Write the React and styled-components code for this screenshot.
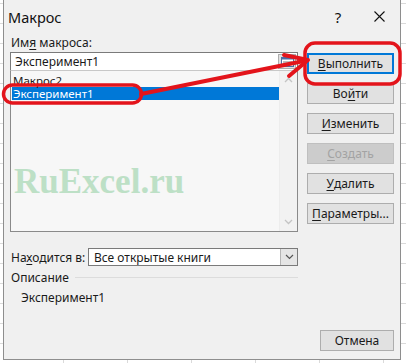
import React from 'react';
import styled, { createGlobalStyle } from 'styled-components';

const GlobalStyle = createGlobalStyle`
  html, body {
    margin: 0;
    padding: 0;
  }
  body {
    width: 406px;
    height: 363px;
    overflow: hidden;
    background-color: #ffffff;
    background-image:
      repeating-linear-gradient(0deg, transparent 0 19px, #dadada 19px 20px),
      repeating-linear-gradient(90deg, transparent 0 63px, #dadada 63px 64px);
    font-family: "Segoe UI", "Noto Sans", "Liberation Sans", sans-serif;
  }
`;

const Page = styled.div`
  position: relative;
  width: 406px;
  height: 363px;
`;

const Dialog = styled.div`
  margin-left: 3px;
  width: 398px;
  height: 360px;
  box-sizing: border-box;
  border: 1px solid #8e8e8e;
  border-top: none;
  background: #f0f0f0;
  display: flex;
  flex-direction: column;
  color: #1a1a1a;
  font-size: 12px;
`;

const TitleBar = styled.div`
  height: 30px;
  flex: none;
  display: flex;
  align-items: center;
  padding-left: 4px;
  font-size: 14.5px;
  color: #111;
`;

const Title = styled.span`
  flex: 1;
  padding-top: 3px;
`;

const TitleButton = styled.span`
  width: ${p => p.$w}px;
  display: flex;
  justify-content: center;
  align-items: center;
  font-size: 15px;
  padding-top: 3px;
`;

const Body = styled.div`
  flex: 1;
  display: flex;
  gap: 9px;
  padding: 5px 6px 8px 6px;
`;

const LeftColumn = styled.div`
  width: 289px;
  display: flex;
  flex-direction: column;
`;

const RightColumn = styled.div`
  flex: 1;
  display: flex;
  flex-direction: column;
  gap: 9px;
  padding-top: 18px;
`;

const Label = styled.div`
  height: 17px;
  line-height: 15px;
  padding-left: 1px;
`;

const Key = styled.span`
  text-decoration: underline;
  text-underline-offset: 2px;
`;

const InputBox = styled.div`
  height: 19px;
  box-sizing: border-box;
  border: 1px solid #7a7a7a;
  background: #ffffff;
  display: flex;
  align-items: center;
  padding-left: 4px;
`;

const InputText = styled.span`
  flex: 1;
`;

const RefButton = styled.span`
  width: 18px;
  height: 15px;
  margin-right: 1px;
  box-sizing: border-box;
  border: 1px solid #adadad;
  background: #e1e1e1;
  display: flex;
  align-items: center;
  justify-content: center;
`;

const ListBox = styled.div`
  height: 162px;
  margin-top: -1px;
  box-sizing: border-box;
  border: 1px solid #8a8a8a;
  border-top-color: #c8c8c8;
  background: #f7f7f7;
  display: flex;
  position: relative;
`;

const Rows = styled.div`
  flex: 1;
  padding-top: 3px;
  padding-left: 1px;
`;

const Row = styled.div`
  height: 13px;
  line-height: 13px;
  font-size: 11.5px;
  padding-left: 1px;
  background: ${p => (p.$selected ? '#0078d7' : 'transparent')};
  color: ${p => (p.$selected ? '#ffffff' : '#1a1a1a')};
`;

const ScrollBar = styled.div`
  width: 17px;
  display: flex;
  flex-direction: column;
  justify-content: space-between;
  align-items: center;
  padding: 6px 0 6px;
  border-left: 1px solid #ededed;
  background: #f2f2f2;
`;

const Watermark = styled.div`
  position: absolute;
  left: 3px;
  top: 93px;
  font-family: "Liberation Serif", "DejaVu Serif", serif;
  font-weight: bold;
  font-size: 35px;
  line-height: 1;
  color: #bde0c6;
  pointer-events: none;
`;

const LocationRow = styled.div`
  display: flex;
  align-items: center;
  margin-top: 16px;
  height: 18px;
`;

const LocationLabel = styled.div`
  width: 77px;
  padding-left: 1px;
`;

const Combo = styled.div`
  flex: 1;
  height: 18px;
  box-sizing: border-box;
  border: 1px solid #7a7a7a;
  background: #ffffff;
  display: flex;
  align-items: center;
  padding-left: 5px;
`;

const ComboText = styled.span`
  flex: 1;
`;

const ComboArrow = styled.span`
  width: 16px;
  height: 16px;
  border-left: 1px solid #b5b5b5;
  background: #e5e5e5;
  display: flex;
  align-items: center;
  justify-content: center;
`;

const Group = styled.div`
  margin-top: 3px;
  flex: 1;
  display: flex;
  flex-direction: column;
`;

const GroupHead = styled.div`
  display: flex;
  align-items: center;
  gap: 6px;
  height: 16px;
  padding-left: 1px;
  &::after {
    content: '';
    flex: 1;
    height: 1px;
    background: #dcdcdc;
  }
`;

const GroupText = styled.div`
  padding: 4px 0 0 11px;
`;

const Button = styled.div`
  height: 21px;
  box-sizing: border-box;
  width: ${p => (p.$narrow ? '74px' : '87px')};
  align-self: flex-end;
  border: 1px solid ${p => (p.$default ? '#0078d7' : p.$disabled ? '#bfbfbf' : '#adadad')};
  box-shadow: ${p => (p.$default ? 'inset 0 0 0 1px #0078d7' : 'none')};
  background: ${p => (p.$disabled ? '#cccccc' : '#e1e1e1')};
  color: ${p => (p.$disabled ? '#a3a3a3' : '#1a1a1a')};
  display: flex;
  align-items: center;
  justify-content: center;
  margin-top: ${p => (p.$bottom ? 'auto' : '0')};
`;

const Overlay = styled.svg`
  position: absolute;
  left: 0;
  top: 0;
  pointer-events: none;
`;

function Chevron({ up }) {
  return (
    <svg width="9" height="6" viewBox="0 0 9 6">
      <path
        d={up ? 'M1 5 L4.5 1.5 L8 5' : 'M1 1 L4.5 4.5 L8 1'}
        fill="none"
        stroke="#c4c4c4"
        strokeWidth="1.3"
      />
    </svg>
  );
}

function RefIcon() {
  return (
    <svg width="13" height="10" viewBox="0 0 13 10">
      <rect x="0.5" y="0.5" width="12" height="9" fill="#ffffff" stroke="#4a6ea8" />
      <rect x="0.5" y="0.5" width="12" height="2" fill="#4a6ea8" />
      <path d="M2 5 H11 M2 7 H9" stroke="#7a7a7a" strokeWidth="1" />
    </svg>
  );
}

function App() {
  return (
    <Page>
      <GlobalStyle />
      <Dialog>
        <TitleBar>
          <Title>Макрос</Title>
          <TitleButton $w={40}>?</TitleButton>
          <TitleButton $w={42}>
            <svg width="11" height="11" viewBox="0 0 11 11">
              <path d="M0.5 0.5 L10.5 10.5 M10.5 0.5 L0.5 10.5" stroke="#111" strokeWidth="1.1" />
            </svg>
          </TitleButton>
        </TitleBar>
        <Body>
          <LeftColumn>
            <Label>
              Им<Key>я</Key> макроса:
            </Label>
            <InputBox>
              <InputText>Эксперимент1</InputText>
              <RefButton>
                <RefIcon />
              </RefButton>
            </InputBox>
            <ListBox>
              <Rows>
                <Row>Макрос2</Row>
                <Row $selected>Эксперимент1</Row>
              </Rows>
              <ScrollBar>
                <Chevron up />
                <Chevron />
              </ScrollBar>
              <Watermark>RuExcel.ru</Watermark>
            </ListBox>
            <LocationRow>
              <LocationLabel>
                На<Key>х</Key>одится в:
              </LocationLabel>
              <Combo>
                <ComboText>Все открытые книги</ComboText>
                <ComboArrow>
                  <svg width="9" height="6" viewBox="0 0 9 6">
                    <path d="M1 1 L4.5 4.5 L8 1" fill="none" stroke="#555" strokeWidth="1.2" />
                  </svg>
                </ComboArrow>
              </Combo>
            </LocationRow>
            <Group>
              <GroupHead>Описание</GroupHead>
              <GroupText>Эксперимент1</GroupText>
            </Group>
          </LeftColumn>
          <RightColumn>
            <Button $default>
              <Key>В</Key>ыполнить
            </Button>
            <Button>
              Во<Key>й</Key>ти
            </Button>
            <Button>
              <Key>И</Key>зменить
            </Button>
            <Button $disabled>
              <Key>С</Key>оздать
            </Button>
            <Button>
              <Key>У</Key>далить
            </Button>
            <Button>
              <Key>П</Key>араметры...
            </Button>
            <Button $bottom $narrow>
              Отмена
            </Button>
          </RightColumn>
        </Body>
      </Dialog>
      <Overlay width="406" height="363" viewBox="0 0 406 363">
        <rect x="3.5" y="85" width="138" height="18" rx="9" fill="none" stroke="#e3141b" strokeWidth="3.5" />
        <rect x="305" y="43" width="95" height="41" rx="10" fill="none" stroke="#e3141b" strokeWidth="3.5" />
        <path d="M141 94 L304 61" stroke="#e3141b" strokeWidth="4" strokeLinecap="round" />
        <path d="M284 55 L308 60 L289 76" fill="none" stroke="#e3141b" strokeWidth="4" strokeLinecap="round" strokeLinejoin="round" />
      </Overlay>
    </Page>
  );
}

export default App;
